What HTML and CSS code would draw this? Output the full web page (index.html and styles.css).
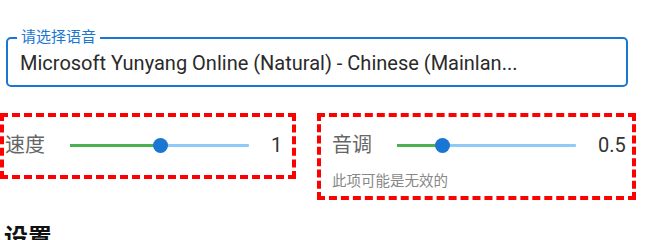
FILE: index.html
```html
<!DOCTYPE html>
<html lang="zh-CN">
<head>
<meta charset="utf-8">
<title>语音设置</title>
<link rel="stylesheet" href="styles.css">
</head>
<body>
<div class="page">
  <div class="select">
    <span class="select-label">请选择语音</span>
    <div class="select-value">Microsoft Yunyang Online (Natural) - Chinese (Mainlan...</div>
  </div>
  <div class="controls">
    <div class="panel panel-speed">
      <div class="slider-row">
        <span class="slider-label">速度</span>
        <div class="slider">
          <div class="track"><div class="fill" style="width:50%"></div></div>
          <div class="thumb" style="left:50%"></div>
        </div>
        <span class="slider-value">1</span>
      </div>
    </div>
    <div class="panel panel-pitch">
      <div class="slider-row">
        <span class="slider-label">音调</span>
        <div class="slider">
          <div class="track"><div class="fill" style="width:25%"></div></div>
          <div class="thumb" style="left:25%"></div>
        </div>
        <span class="slider-value">0.5</span>
      </div>
      <div class="hint">此项可能是无效的</div>
    </div>
  </div>
  <h2 class="section-title">设置</h2>
</div>
</body>
</html>
```
FILE: styles.css
```css
html, body {
  margin: 0;
  padding: 0;
  background: #fff;
}
body {
  font-family: Roboto, "Noto Sans CJK SC", sans-serif;
  color: #222;
}
.page {
  padding-top: 37px;
  width: 646px;
}
.select {
  position: relative;
  box-sizing: border-box;
  margin-left: 6px;
  width: 622px;
  height: 50px;
  border: 2px solid #1976d2;
  border-radius: 5px;
  display: flex;
  align-items: center;
  padding: 0 12px;
}
.select-label {
  position: absolute;
  left: 9px;
  top: -12px;
  padding: 0 4px;
  background: #fff;
  color: #1976d2;
  font-size: 15px;
  line-height: 20px;
}
.select-value {
  font-size: 20px;
  line-height: 24px;
  color: #2a2a2a;
  white-space: nowrap;
  margin-top: 2px;
}
.controls {
  display: flex;
  gap: 21px;
  margin-top: 26px;
  align-items: flex-start;
}
.panel {
  box-sizing: border-box;
  border: 4px dashed #f00;
  padding: 13px 0 15px;
}
.panel-speed {
  width: 296px;
  padding-left: 1px;
}
.panel-pitch {
  width: 319px;
  padding-left: 11px;
  padding-bottom: 4px;
}
.slider-row {
  display: flex;
  align-items: center;
  height: 30px;
}
.slider-label {
  width: 65px;
  flex: none;
  font-size: 20px;
  color: #666;
  line-height: 30px;
}
.slider {
  position: relative;
  width: 179px;
  height: 14px;
  flex: none;
  display: flex;
  align-items: center;
}
.track {
  width: 100%;
  height: 3px;
  background: #90caf9;
  border-radius: 1px;
}
.fill {
  height: 100%;
  background: #4caf50;
}
.thumb {
  position: absolute;
  top: 0;
  width: 15px;
  height: 15px;
  margin-left: -7px;
  border-radius: 50%;
  background: #1976d2;
}
.slider-value {
  margin-left: 22px;
  font-size: 20px;
  color: #333;
}
.hint {
  margin-top: 12px;
  font-size: 14.5px;
  line-height: 20px;
  color: #888;
}
.section-title {
  margin: 20px 0 0 4px;
  font-size: 24px;
  line-height: 36px;
  font-weight: 700;
  color: #111;
}
```
